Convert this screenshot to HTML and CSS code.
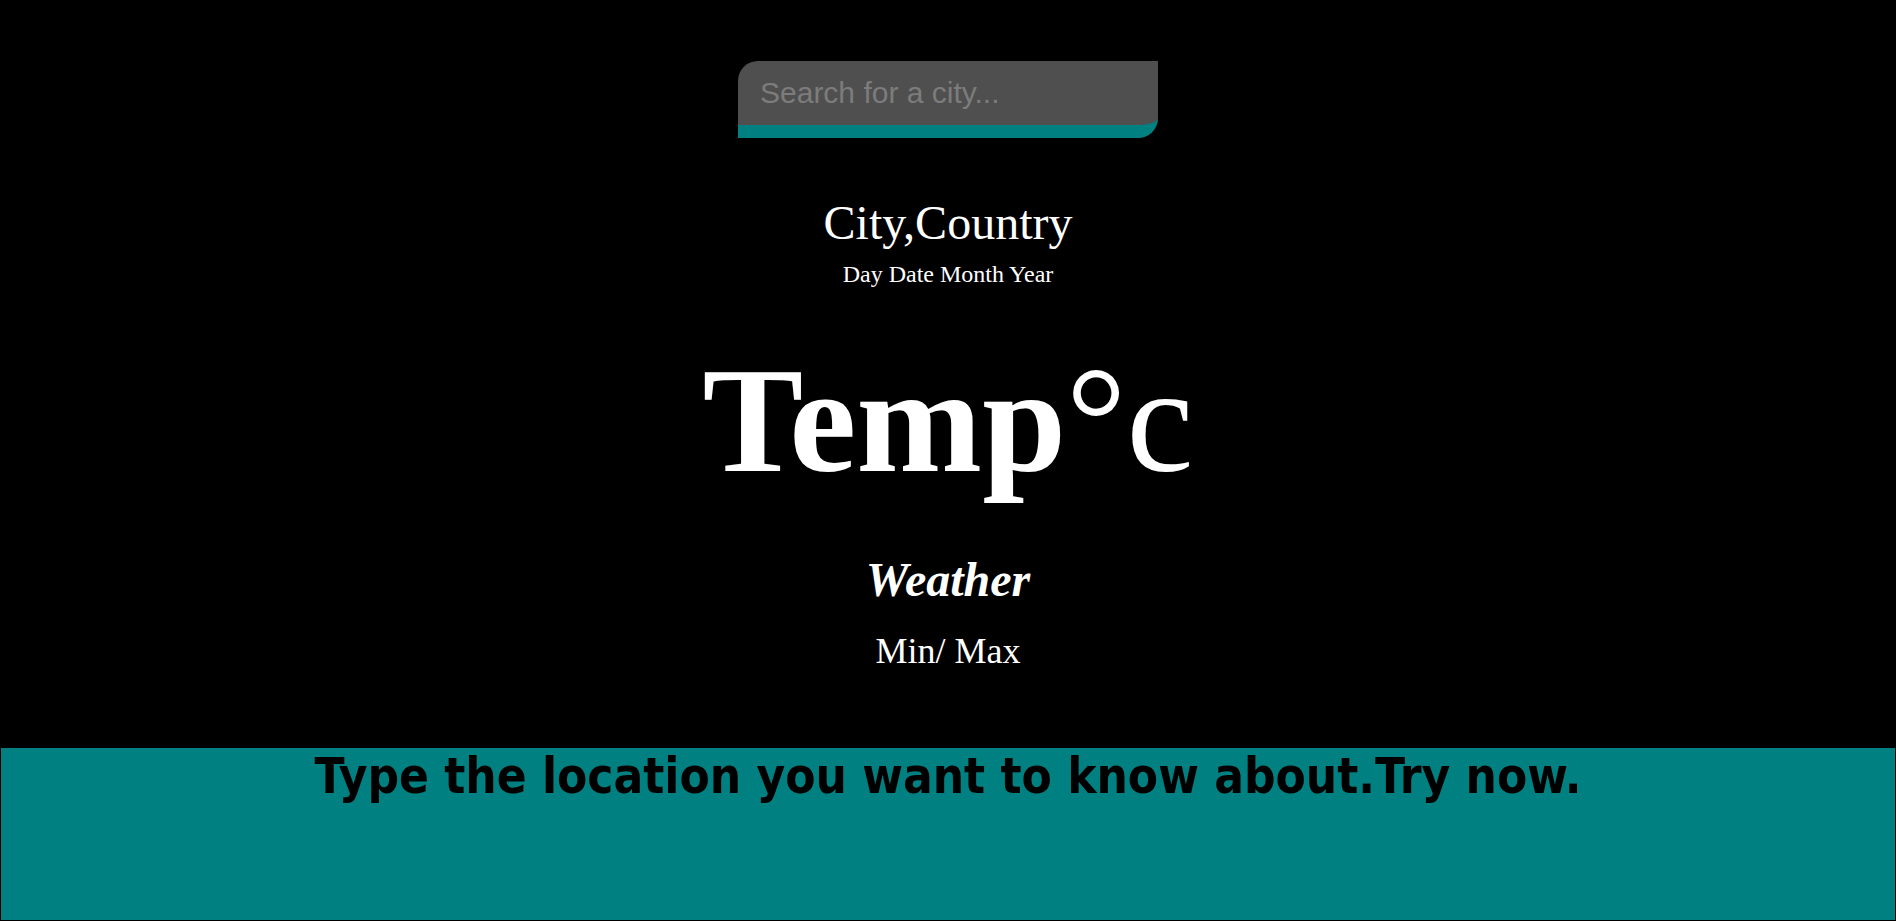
FILE: index.html
```html
<!DOCTYPE html>
<html lang="en">
<head>
<meta charset="utf-8">
<title>Weather</title>
<link rel="stylesheet" href="styles.css">
</head>
<body>
<div class="page">
  <main class="main">
    <input class="search" type="text" placeholder="Search for a city...">
    <div class="city">City,Country</div>
    <div class="date">Day Date Month Year</div>
    <div class="temp"><span class="temp-num">Temp</span><span class="temp-unit">°c</span></div>
    <div class="weather">Weather</div>
    <div class="minmax">Min/ Max</div>
  </main>
  <footer class="footer">
    <h2 class="footer-text">Type the location you want to know about.Try now.</h2>
  </footer>
</div>
</body>
</html>
```

FILE: styles.css
```css
html, body {
  margin: 0;
  padding: 0;
  background: #000;
}

body {
  font-family: "Liberation Serif", "Times New Roman", serif;
  color: #fff;
}

.page {
  min-height: 100vh;
  display: flex;
  flex-direction: column;
}

.main {
  flex: 1;
  display: flex;
  flex-direction: column;
  align-items: center;
  padding-top: 61px;
}

.search {
  box-sizing: border-box;
  width: 420px;
  height: 77px;
  margin: 0;
  padding: 0 22px;
  border: none;
  border-bottom: 13px solid #008080;
  border-radius: 20px 0 20px 0;
  background: #4f4f4f;
  color: #fff;
  font-family: "Liberation Sans", Arial, sans-serif;
  font-size: 30px;
  outline: none;
}

.search::placeholder {
  color: #7c7c7c;
}

.city {
  margin-top: 58px;
  font-size: 48px;
  line-height: 54px;
}

.date {
  margin-top: 10px;
  font-size: 24px;
  line-height: 28px;
}

.temp {
  margin-top: 52px;
  font-size: 151px;
  line-height: 160px;
}

.temp-num {
  font-weight: bold;
}

.temp-unit {
  font-weight: normal;
}

.weather {
  margin-top: 54px;
  font-size: 48px;
  line-height: 52px;
  font-weight: bold;
  font-style: italic;
}

.minmax {
  margin-top: 24px;
  font-size: 36px;
  line-height: 42px;
}

.footer {
  flex: none;
  box-sizing: border-box;
  height: 174px;
  background: #008080;
  border: 1px solid #000;
}

.footer-text {
  margin: 0;
  text-align: center;
  color: #000;
  font-family: "DejaVu Sans Condensed", "DejaVu Sans", sans-serif;
  font-stretch: condensed;
  font-weight: bold;
  font-size: 49px;
  line-height: normal;
}
```
